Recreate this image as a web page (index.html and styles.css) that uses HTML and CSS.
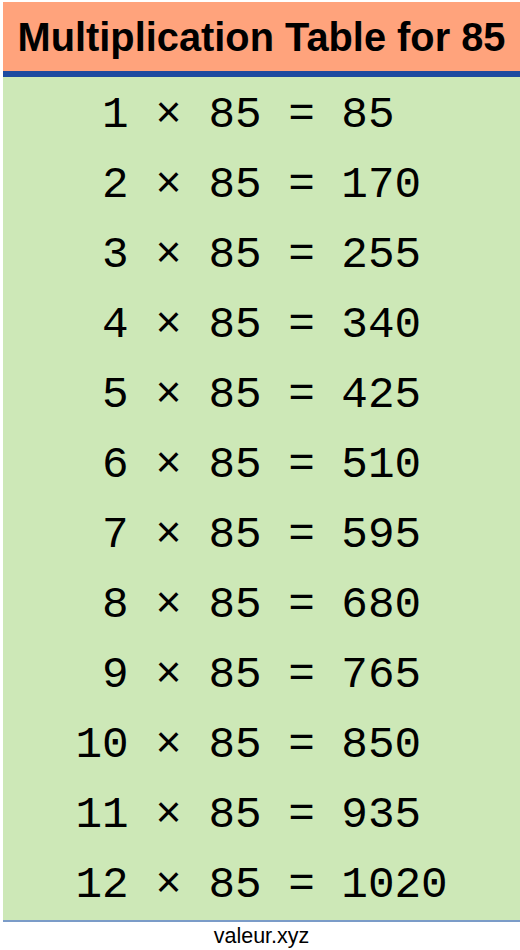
FILE: index.html
```html
<!DOCTYPE html>
<html>
<head>
<meta charset="utf-8">
<link rel="stylesheet" href="styles.css">
</head>
<body>
<div class="sheet">
  <div class="title">Multiplication Table for 85</div>
  <div class="table">
    <div class="rows">
      <div class="row"> 1 × 85 = 85</div>
      <div class="row"> 2 × 85 = 170</div>
      <div class="row"> 3 × 85 = 255</div>
      <div class="row"> 4 × 85 = 340</div>
      <div class="row"> 5 × 85 = 425</div>
      <div class="row"> 6 × 85 = 510</div>
      <div class="row"> 7 × 85 = 595</div>
      <div class="row"> 8 × 85 = 680</div>
      <div class="row"> 9 × 85 = 765</div>
      <div class="row">10 × 85 = 850</div>
      <div class="row">11 × 85 = 935</div>
      <div class="row">12 × 85 = 1020</div>
    </div>
  </div>
  <div class="footer">valeur.xyz</div>
</div>
</body>
</html>
```
FILE: styles.css
```css
html, body {
  margin: 0;
  padding: 0;
  background: #ffffff;
}
.sheet {
  margin: 2px 0 0 3px;
}
.title {
  box-sizing: border-box;
  height: 75px;
  background: #ffa37c;
  border-bottom: 6px solid #1d4aa0;
  font-family: "Liberation Sans", Arial, sans-serif;
  font-weight: bold;
  font-size: 39.8px;
  line-height: 70px;
  text-align: center;
  color: #000;
}
.table {
  background: #cde8b7;
  border-bottom: 2px solid #7b9cc8;
  height: 843px;
  display: flex;
  justify-content: center;
}
.rows {
  width: 372px;
  padding-top: 3px;
}
.row {
  height: 70px;
  line-height: 70px;
  white-space: pre;
  font-family: "Liberation Mono", "Courier New", monospace;
  font-size: 44.3px;
  color: #000;
}
.footer {
  text-align: center;
  font-family: "Liberation Sans", Arial, sans-serif;
  font-size: 21.5px;
  line-height: 26px;
  color: #000;
  padding-top: 1px;
}
```
